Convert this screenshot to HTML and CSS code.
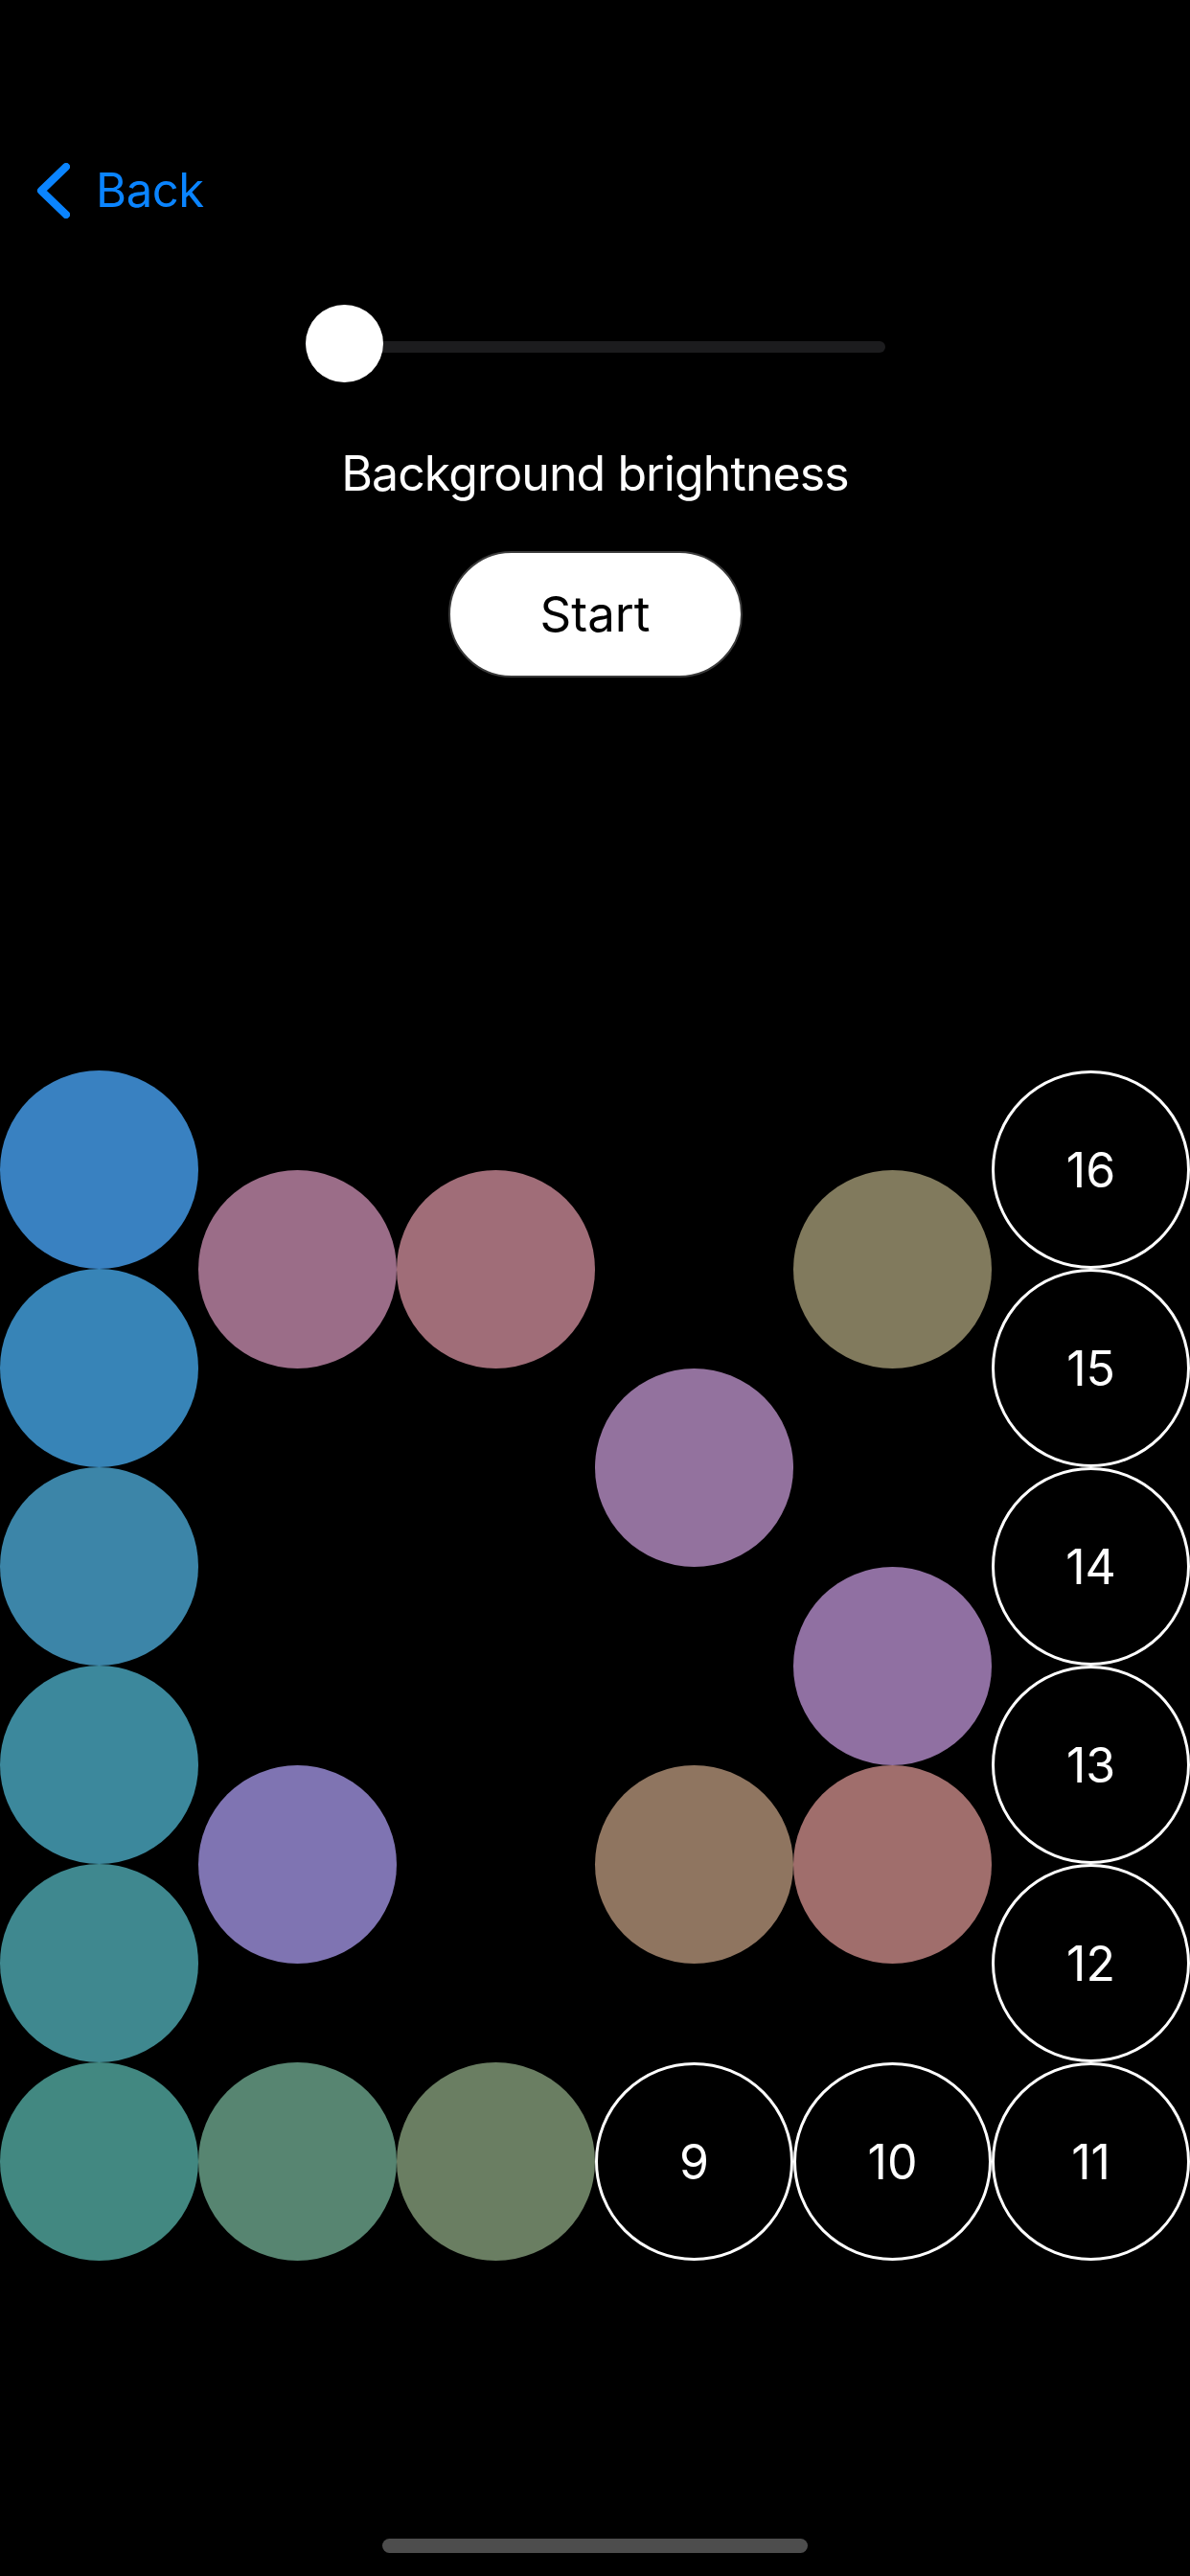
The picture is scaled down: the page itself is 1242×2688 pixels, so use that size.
FILE: index.html
```html
<!DOCTYPE html>
<html lang="en">
<head>
<meta charset="utf-8">
<title>Background brightness</title>
<link rel="stylesheet" href="styles.css">
</head>
<body>
<div class="screen">
  <nav class="nav">
    <a class="back" href="#">
      <svg class="chev" width="35" height="58" viewBox="0 0 35 58"><path d="M31 4 L5 29 L31 54" fill="none" stroke="#0A84FF" stroke-width="8" stroke-linecap="round" stroke-linejoin="round"/></svg>
      <span class="back-text">Back</span>
    </a>
  </nav>

  <div class="slider">
    <div class="track"></div>
    <div class="knob"></div>
  </div>

  <div class="label">Background brightness</div>

  <div class="btn-row"><button class="start">Start</button></div>

  <div class="board">
    <div class="dot c1 r1" style="background:#3981C1"></div>
    <div class="dot c1 r3" style="background:#3784B7"></div>
    <div class="dot c1 r5" style="background:#3C85A8"></div>
    <div class="dot c1 r7" style="background:#3C889C"></div>
    <div class="dot c1 r9" style="background:#3F888F"></div>
    <div class="dot c1 r11" style="background:#428881"></div>

    <div class="dot c2 r2" style="background:#9B6D88"></div>
    <div class="dot c2 r8" style="background:#7F74B2"></div>
    <div class="dot c2 r11" style="background:#578571"></div>

    <div class="dot c3 r2" style="background:#A06D78"></div>
    <div class="dot c3 r11" style="background:#6A7E62"></div>

    <div class="dot c4 r4" style="background:#93729E"></div>
    <div class="dot c4 r8" style="background:#8F7560"></div>
    <div class="dot c4 r11 ring">9</div>

    <div class="dot c5 r2" style="background:#817A5D"></div>
    <div class="dot c5 r6" style="background:#9070A2"></div>
    <div class="dot c5 r8" style="background:#A06E6C"></div>
    <div class="dot c5 r11 ring">10</div>

    <div class="dot c6 r1 ring">16</div>
    <div class="dot c6 r3 ring">15</div>
    <div class="dot c6 r5 ring">14</div>
    <div class="dot c6 r7 ring">13</div>
    <div class="dot c6 r9 ring">12</div>
    <div class="dot c6 r11 ring">11</div>
  </div>

  <div class="home-row"><div class="home"></div></div>
</div>
</body>
</html>
```

FILE: styles.css
```css
html, body {
  margin: 0;
  padding: 0;
  background: #000;
}
body {
  font-family: Inter, "Noto Sans", "Liberation Sans", sans-serif;
  color: #fff;
}
.screen {
  width: 1242px;
  height: 2688px;
  background: #000;
  overflow: hidden;
}
.nav {
  padding-top: 154px;
  height: 90px;
  padding-left: 38px;
  display: flex;
  align-items: center;
}
.back {
  display: flex;
  align-items: center;
  text-decoration: none;
  color: #0A84FF;
}
.chev {
  display: block;
  margin-top: -1px;
}
.back-text {
  font-size: 49px;
  line-height: 60px;
  margin-left: 27px;
  letter-spacing: -0.4px;
}
.slider {
  position: relative;
  width: 605px;
  height: 81px;
  margin: 74px auto 0;
  display: flex;
  align-items: center;
}
.track {
  flex: 1;
  height: 12px;
  margin-top: 6px;
  border-radius: 6px;
  background: #1C1C1E;
}
.knob {
  position: absolute;
  left: 0;
  top: 0;
  width: 81px;
  height: 81px;
  border-radius: 50%;
  background: #fff;
}
.label {
  margin-top: 65px;
  text-align: center;
  font-size: 50px;
  line-height: 60px;
  letter-spacing: -0.9px;
  color: #fff;
}
.btn-row {
  margin-top: 51px;
  display: flex;
  justify-content: center;
}
.start {
  width: 307px;
  height: 132px;
  box-sizing: border-box;
  border: 2px solid #3a3a3a;
  border-radius: 66px;
  background: #fff;
  color: #000;
  font-family: Inter, "Noto Sans", "Liberation Sans", sans-serif;
  font-size: 51px;
  line-height: 60px;
  padding: 0;
  display: flex;
  align-items: center;
  justify-content: center;
}
.board {
  margin-top: 410px;
  display: grid;
  grid-template-columns: repeat(6, 207px);
  grid-template-rows: repeat(12, 103.5px);
}
.dot {
  grid-row-end: span 2;
  width: 207px;
  height: 207px;
  border-radius: 50%;
  box-sizing: border-box;
}
.ring {
  border: 3px solid #fff;
  background: #000;
  display: flex;
  align-items: center;
  justify-content: center;
  font-size: 50px;
  line-height: 60px;
  color: #fff;
}
.c1 { grid-column: 1; }
.c2 { grid-column: 2; }
.c3 { grid-column: 3; }
.c4 { grid-column: 4; }
.c5 { grid-column: 5; }
.c6 { grid-column: 6; }
.r1 { grid-row-start: 1; }
.r2 { grid-row-start: 2; }
.r3 { grid-row-start: 3; }
.r4 { grid-row-start: 4; }
.r5 { grid-row-start: 5; }
.r6 { grid-row-start: 6; }
.r7 { grid-row-start: 7; }
.r8 { grid-row-start: 8; }
.r9 { grid-row-start: 9; }
.r11 { grid-row-start: 11; }
.home-row {
  margin-top: 290px;
  display: flex;
  justify-content: center;
}
.home {
  width: 444px;
  height: 15px;
  border-radius: 8px;
  background: #4D4D4D;
}
```
